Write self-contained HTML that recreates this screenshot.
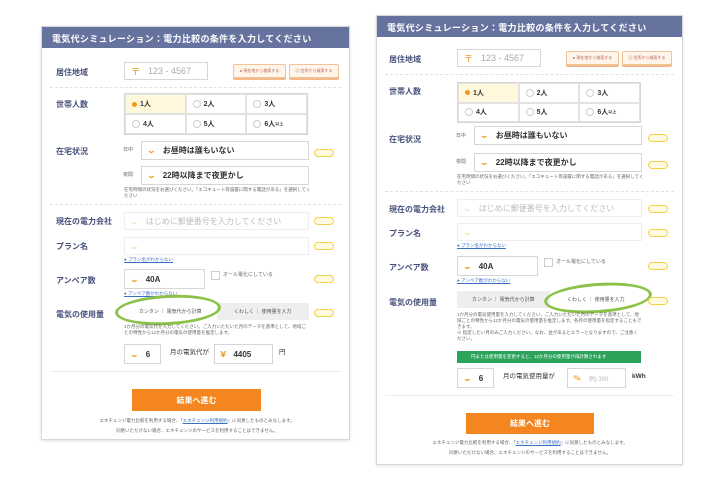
<!DOCTYPE html>
<html><head><meta charset="utf-8">
<style>
*{box-sizing:border-box;margin:0;padding:0}
body{width:720px;height:480px;background:#fff;position:relative;overflow:hidden;font-family:"Liberation Sans","Noto Sans CJK JP",sans-serif;color:#333}
.p{position:absolute;border:1px solid #d8d8dc;background:#fff;box-shadow:0 1px 3px rgba(0,0,0,.12)}
.a{position:absolute}
.hd{position:absolute;left:0;top:0;right:0;height:21px;background:#66739f;color:#fff;font-size:9px;font-weight:bold;padding:5px 0 0 10px;letter-spacing:.3px}
.lb{position:absolute;font-size:8px;font-weight:bold;color:#46507a}
.box{position:absolute;border:1px solid #d6d6d6;background:#fff;font-size:8px;font-weight:bold;padding-left:6px;display:flex;align-items:center}
.chev{color:#f19a1a;font-size:8px;margin-right:8px;transform:scaleX(1.4)}
.pill{position:absolute;width:20px;height:8px;border:1.5px solid #f3d24a;border-radius:5px;background:#fffbe3}
.sep{position:absolute;border-top:1px dashed #e2e2e2}
.tiny{position:absolute;font-size:4.5px;color:#666;line-height:6px}
.link{position:absolute;font-size:4.5px;color:#3b6fc2;text-decoration:underline}
.grid{position:absolute;display:grid;grid-template-columns:repeat(3,1fr);grid-template-rows:1fr 1fr;border:1px solid #d6d6d6}
.grid div{border:1px solid #e2e2e2;font-size:7px;font-weight:bold;display:flex;align-items:center;padding-left:6px}
.rd{width:8px;height:8px;border-radius:50%;border:1px solid #ccc;margin-right:3px;display:inline-block}
.tabs{position:absolute;display:flex;background:#eeeef0;font-size:5px;color:#555}
.tabs div{flex:1;display:flex;align-items:center;justify-content:center}
.btn{position:absolute;background:#f5861f;color:#fff;font-size:8px;font-weight:bold;display:flex;align-items:center;justify-content:center}
.ob{position:absolute;height:14px;border:1px solid #f0c39a;background:#fff5ea;border-radius:2px;font-size:4px;color:#b65;display:flex;align-items:center;justify-content:center;box-shadow:0 2px 0 #f3b98a}
.ell{position:absolute;border:3px solid #8dc24a;border-radius:50%}
</style></head><body>

<!-- LEFT PANEL -->
<div class="p" style="left:41px;top:26px;width:309px;height:414px">
<div class="hd">電気代シミュレーション：電力比較の条件を入力してください</div>
<div class="lb" style="left:14px;top:40px">居住地域</div>
<div class="box" style="left:82px;top:35px;width:84px;height:18px;font-weight:normal;color:#aaa;font-size:9px"><span style="color:#f19a1a;margin-right:8px">〒</span>123 - 4567</div>
<div class="ob" style="left:191px;top:37px;width:53px">● 現在地から検索する</div>
<div class="ob" style="left:247px;top:37px;width:50px">▥ 住所から検索する</div>
<div class="sep" style="left:8px;right:8px;top:60px"></div>
<div class="lb" style="left:14px;top:72px">世帯人数</div>
<div class="grid" style="left:82px;top:66px;width:184px;height:42px">
<div style="background:#fff8dc"><span class="rd" style="background:#f19a1a;border-color:#f19a1a;width:5px;height:5px"></span>1人</div><div><span class="rd"></span>2人</div><div><span class="rd"></span>3人</div>
<div><span class="rd"></span>4人</div><div><span class="rd"></span>5人</div><div><span class="rd"></span>6人<small style="font-size:4px">以上</small></div></div>
<div class="lb" style="left:14px;top:119px">在宅状況</div>
<div class="tiny" style="left:81px;top:120px;font-size:5px">日中</div>
<div class="box" style="left:99px;top:114px;width:168px;height:19px"><span class="chev">⌄</span>お昼時は誰もいない</div>
<div class="pill" style="left:272px;top:122px"></div>
<div class="tiny" style="left:81px;top:145px;font-size:5px">夜間</div>
<div class="box" style="left:99px;top:139px;width:168px;height:19px"><span class="chev">⌄</span>22時以降まで夜更かし</div>
<div class="tiny" style="left:82px;top:160px;width:190px">在宅時間の状況をお選びください。「エコキュート等設置に関する電話がある」を選択してください</div>
<div class="sep" style="left:8px;right:8px;top:177px"></div>
<div class="lb" style="left:14px;top:189px">現在の電力会社</div>
<div class="box" style="left:82px;top:185px;width:185px;height:18px;font-weight:normal;color:#bbb;border-color:#eee"><span class="chev" style="color:#f6d9a8">⌄</span>はじめに郵便番号を入力してください</div>
<div class="pill" style="left:272px;top:190px"></div>
<div class="lb" style="left:14px;top:214px">プラン名</div>
<div class="box" style="left:82px;top:210px;width:185px;height:18px;border-color:#eee"><span class="chev" style="color:#f6d9a8">⌄</span></div>
<div class="pill" style="left:272px;top:215px"></div>
<div class="link" style="left:82px;top:230px">● プラン名がわからない</div>
<div class="lb" style="left:14px;top:248px">アンペア数</div>
<div class="box" style="left:82px;top:242px;width:81px;height:20px"><span class="chev">⌄</span>40A</div>
<div class="a" style="left:169px;top:244px;width:9px;height:9px;border:1px solid #ccc"></div>
<div class="tiny" style="left:181px;top:245px;font-size:5px">オール電化にしている</div>
<div class="pill" style="left:272px;top:248px"></div>
<div class="link" style="left:82px;top:264px">● アンペア数がわからない</div>
<div class="lb" style="left:14px;top:282px">電気の使用量</div>
<div class="tabs" style="left:82px;top:276px;width:185px;height:17px"><div style="background:#fff">カンタン ｜ 電気代から計算</div><div>くわしく ｜ 使用量を入力</div></div>
<div class="ell" style="left:73px;top:268px;width:106px;height:30px;transform:rotate(-3deg)"></div>
<div class="pill" style="left:272px;top:282px"></div>
<div class="tiny" style="left:82px;top:297px;width:185px">1か月分の電気代を入力してください。ご入力いただいた月のデータを基準として、地域ごとの特性から12か月分の電気の使用量を推定します。</div>
<div class="box" style="left:82px;top:317px;width:37px;height:20px"><span class="chev">⌄</span>6</div>
<div class="tiny" style="left:128px;top:323px;font-size:6.5px;color:#333">月の電気代が</div>
<div class="box" style="left:172px;top:317px;width:59px;height:20px"><span class="chev">¥</span>4405</div>
<div class="tiny" style="left:237px;top:323px;font-size:6.5px;color:#333">円</div>
<div class="sep" style="left:8px;right:8px;top:344px;border-top-style:solid;border-color:#eee"></div>
<div class="btn" style="left:90px;top:362px;width:129px;height:22px">結果へ進む</div>
<div class="tiny" style="left:40px;top:389px;width:230px;text-align:center;line-height:10px">エネチェンジ電力比較を利用する場合、「<u style="color:#3b6fc2">エネチェンジ利用規約</u>」に同意したものとみなします。<br>同意いただけない場合、エネチェンジのサービスを利用することはできません。</div>
</div>

<!-- RIGHT PANEL -->
<div class="p" style="left:376px;top:15px;width:307px;height:450px">
<div class="hd">電気代シミュレーション：電力比較の条件を入力してください</div>
<div class="lb" style="left:12px;top:38px">居住地域</div>
<div class="box" style="left:80px;top:33px;width:84px;height:18px;font-weight:normal;color:#aaa;font-size:9px"><span style="color:#f19a1a;margin-right:8px">〒</span>123 - 4567</div>
<div class="ob" style="left:189px;top:35px;width:53px">● 現在地から検索する</div>
<div class="ob" style="left:245px;top:35px;width:50px">▥ 住所から検索する</div>
<div class="sep" style="left:8px;right:8px;top:58px"></div>
<div class="lb" style="left:12px;top:70px">世帯人数</div>
<div class="grid" style="left:80px;top:66px;width:184px;height:41px">
<div style="background:#fff8dc"><span class="rd" style="background:#f19a1a;border-color:#f19a1a;width:5px;height:5px"></span>1人</div><div><span class="rd"></span>2人</div><div><span class="rd"></span>3人</div>
<div><span class="rd"></span>4人</div><div><span class="rd"></span>5人</div><div><span class="rd"></span>6人<small style="font-size:4px">以上</small></div></div>
<div class="lb" style="left:12px;top:118px">在宅状況</div>
<div class="tiny" style="left:79px;top:117px;font-size:5px">日中</div>
<div class="box" style="left:97px;top:110px;width:168px;height:19px"><span class="chev">⌄</span>お昼時は誰もいない</div>
<div class="pill" style="left:271px;top:118px"></div>
<div class="tiny" style="left:79px;top:143px;font-size:5px">夜間</div>
<div class="box" style="left:97px;top:137px;width:168px;height:19px"><span class="chev">⌄</span>22時以降まで夜更かし</div>
<div class="pill" style="left:271px;top:145px"></div>
<div class="tiny" style="left:80px;top:158px;width:190px">在宅時間の状況をお選びください。「エコキュート等設置に関する電話がある」を選択してください</div>
<div class="sep" style="left:8px;right:8px;top:175px"></div>
<div class="lb" style="left:12px;top:188px">現在の電力会社</div>
<div class="box" style="left:80px;top:183px;width:185px;height:18px;font-weight:normal;color:#bbb;border-color:#eee"><span class="chev" style="color:#f6d9a8">⌄</span>はじめに郵便番号を入力してください</div>
<div class="pill" style="left:271px;top:189px"></div>
<div class="lb" style="left:12px;top:212px">プラン名</div>
<div class="box" style="left:80px;top:207px;width:185px;height:18px;border-color:#eee"><span class="chev" style="color:#f6d9a8">⌄</span></div>
<div class="pill" style="left:271px;top:213px"></div>
<div class="link" style="left:80px;top:227px">● プラン名がわからない</div>
<div class="lb" style="left:12px;top:246px">アンペア数</div>
<div class="box" style="left:80px;top:240px;width:81px;height:20px"><span class="chev">⌄</span>40A</div>
<div class="a" style="left:167px;top:242px;width:9px;height:9px;border:1px solid #ccc"></div>
<div class="tiny" style="left:179px;top:243px;font-size:5px">オール電化にしている</div>
<div class="pill" style="left:271px;top:246px"></div>
<div class="link" style="left:80px;top:262px">● アンペア数がわからない</div>
<div class="lb" style="left:12px;top:281px">電気の使用量</div>
<div class="tabs" style="left:80px;top:275px;width:185px;height:17px"><div>カンタン ｜ 電気代から計算</div><div style="background:#fff">くわしく ｜ 使用量を入力</div></div>
<div class="ell" style="left:167px;top:267px;width:108px;height:30px;transform:rotate(-4deg)"></div>
<div class="pill" style="left:271px;top:281px"></div>
<div class="tiny" style="left:80px;top:296px;width:185px">1か月分の電気使用量を入力してください。ご入力いただいた月のデータを基準として、地域ごとの特性から12か月分の電気の使用量を推定します。各月の使用量を指定することもできます。<br>※ 指定したい月のみご入力ください。なお、並があるとエラーとなりますので、ご注意ください。</div>
<div class="a" style="left:80px;top:335px;width:184px;height:12px;background:#2ba35a;color:#fff;font-size:4.5px;padding:3px 0 0 14px">円または使用量を変更すると、12か月分の使用量が再計算されます</div>
<div class="box" style="left:80px;top:352px;width:37px;height:20px"><span class="chev">⌄</span>6</div>
<div class="tiny" style="left:126px;top:358px;font-size:6.5px;color:#333">月の電気使用量が</div>
<div class="box" style="left:190px;top:352px;width:59px;height:20px;font-weight:normal;color:#bbb;font-size:6px"><span class="chev">✎</span>例) 300</div>
<div class="tiny" style="left:255px;top:358px;font-size:6.5px;color:#333;font-weight:bold">kWh</div>
<div class="sep" style="left:8px;right:8px;top:379px;border-top-style:solid;border-color:#eee"></div>
<div class="btn" style="left:89px;top:397px;width:128px;height:21px">結果へ進む</div>
<div class="tiny" style="left:38px;top:422px;width:230px;text-align:center;line-height:10px">エネチェンジ電力比較を利用する場合、「<u style="color:#3b6fc2">エネチェンジ利用規約</u>」に同意したものとみなします。<br>同意いただけない場合、エネチェンジのサービスを利用することはできません。</div>
</div>
</body></html>
